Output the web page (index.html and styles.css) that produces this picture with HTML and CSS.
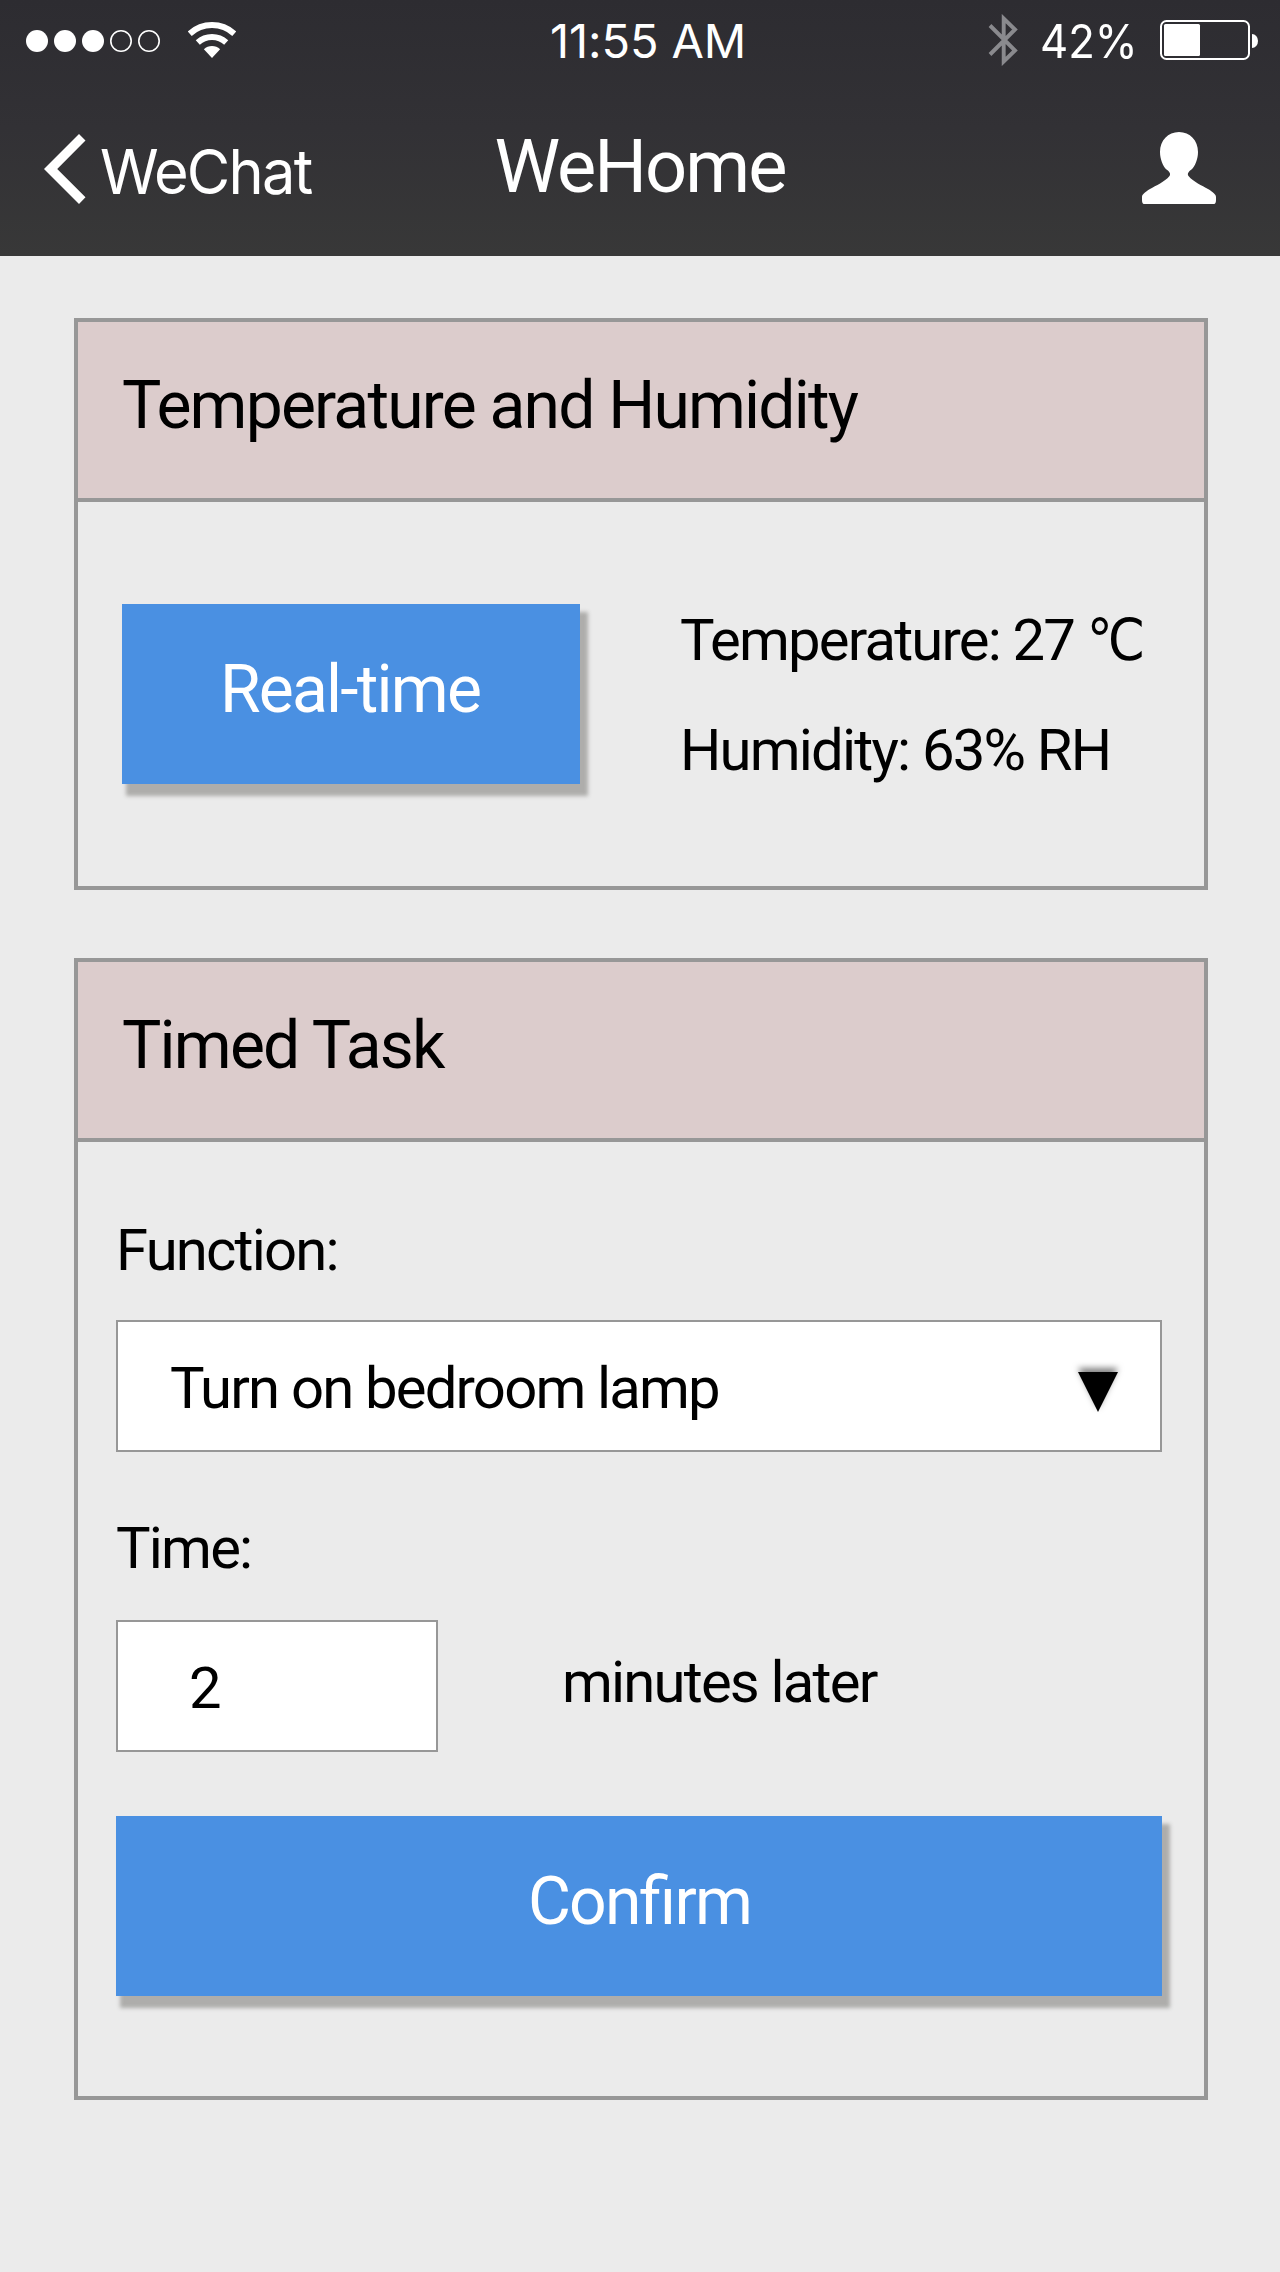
FILE: index.html
```html
<!DOCTYPE html>
<html lang="en">
<head>
<meta charset="utf-8">
<title>WeHome</title>
<link rel="stylesheet" href="styles.css">
</head>
<body>
<header class="top">
  <div class="status">
    <svg class="signal" width="134" height="22" viewBox="0 0 134 22">
      <g fill="#fff"><circle cx="11" cy="11" r="11"/><circle cx="39" cy="11" r="11"/><circle cx="67" cy="11" r="11"/></g>
      <g fill="none" stroke="#fff" stroke-width="1.6"><circle cx="95" cy="11" r="10.2"/><circle cx="123" cy="11" r="10.2"/></g>
    </svg>
    <svg class="wifi" width="48" height="36" viewBox="0 0 48 36">
      <g fill="none" stroke="#fff" stroke-width="6"><path d="M1.7 11.7A33 33 0 0 1 46.3 11.7"/><path d="M9.8 20.5A21 21 0 0 1 38.2 20.5"/></g>
      <path fill="#fff" d="M24 36L15.9 27.2A12 12 0 0 1 32.1 27.2Z"/>
    </svg>
    <span class="clock">11:55 AM</span>
    <div class="power">
      <svg class="bluetooth" width="30" height="52" viewBox="0 0 30 52"><path fill="none" stroke="#8a8a8e" stroke-width="3.9" stroke-miterlimit="6" d="M2 11.5L27 36.5L15.7 47.500V4.500L27 15.500L2 40.5"/></svg>
      <span class="percent">42%</span>
      <svg class="battery" width="98" height="40" viewBox="0 0 98 40">
        <rect x="1" y="1" width="88" height="38" rx="5.5" fill="none" stroke="#fff" stroke-width="2"/>
        <rect x="4" y="4" width="36" height="32" rx="1.5" fill="#fff"/>
        <path fill="#fff" d="M92 14A6 7 0 0 1 92 28Z"/>
      </svg>
    </div>
  </div>
  <nav class="nav">
    <a class="back">
      <svg width="42" height="70" viewBox="0 0 42 70"><path fill="#fff" d="M0 35L35 0L41.5 6.5L13.2 35L41.5 63.3L35 70Z"/></svg>
      <span class="back-label">WeChat</span>
    </a>
    <h1 class="title">WeHome</h1>
    <svg class="person" width="74" height="72" viewBox="0 0 74 72"><path fill="#fff" d="M37 0C48 0 56 8.5 56 20C56 27 53 34.500 49.500 37.500C46.500 39.500 45 42 46.500 44C51.500 50 60 53.500 66 57C71 60 74 62.500 74 65V68C74 70 73.500 72 72 72H2C.5 72 0 70 0 68V65C0 62.500 3 60 8 57C14 53.500 22.500 50 27.500 44C29 42 27.500 39.500 24.500 37.500C21 34.500 18 27 18 20C18 8.500 26 0 37 0Z"/></svg>
  </nav>
</header>
<main class="content">
  <section class="card">
    <h2 class="card-title">Temperature and Humidity</h2>
    <div class="climate">
      <button class="button realtime">Real-time</button>
      <div class="readings">
        <p>Temperature: 27 <span class="degrees">℃</span></p>
        <p>Humidity: 63% RH</p>
      </div>
    </div>
  </section>
  <section class="card">
    <h2 class="card-title">Timed Task</h2>
    <div class="task">
      <p class="label">Function:</p>
      <div class="field select">
        <span>Turn on bedroom lamp</span>
        <svg class="arrow" width="40" height="40" viewBox="0 0 40 40"><path d="M0 0H40L20 40Z"/></svg>
      </div>
      <p class="label time-label">Time:</p>
      <div class="delay">
        <div class="field minutes">2</div>
        <span class="unit">minutes later</span>
      </div>
      <button class="button confirm">Confirm</button>
    </div>
  </section>
</main>
</body>
</html>
```
FILE: styles.css
```css
* { box-sizing: border-box; }
body {
  margin: 0;
  min-height: 2272px;
  background: #ebebeb;
  color: #000;
  font: 58px/70px Roboto, sans-serif;
  letter-spacing: -1.81px;
  white-space: nowrap;
}
h1, h2, p { margin: 0; font-weight: 400; }
svg { display: block; flex: none; }

/* header */
.top {
  height: 256px;
  background: linear-gradient(#2d2c31, #323135 50%, #383838);
  color: #fff;
}
.status {
  display: flex;
  align-items: center;
  height: 82px;
  padding: 0 22px 0 26px;
  font: 47px/82px Inter, sans-serif;
  letter-spacing: -0.1px;
}
.wifi { margin: 0 0 2px 28px; }
.clock { margin-left: 314px; }
.power { display: flex; align-items: center; margin-left: auto; }
.bluetooth { margin-bottom: 2px; }
.percent {
  width: 94px;
  margin: 0 26px 0 22px;
  transform: scaleX(0.93);
  transform-origin: left;
}
.battery { margin-bottom: 2px; }
.nav {
  display: grid;
  grid-template-columns: 1fr auto 1fr;
  align-items: center;
  height: 174px;
  padding: 0 64px 0 44px;
}
.back {
  display: flex;
  align-items: center;
  gap: 14px;
  font: 62px/70px Inter, sans-serif;
}
.back-label {
  padding-top: 5px;
  letter-spacing: -1.8px;
  transform: scaleX(0.96);
  transform-origin: left;
}
.title {
  margin: 0 -10px 5px 10px;
  font-size: 74px;
  line-height: 86px;
  letter-spacing: -2px;
}
.person { justify-self: end; margin-bottom: 2px; }

/* cards */
.content {
  display: flex;
  flex-direction: column;
  gap: 68px;
  padding: 62px 72px 0 74px;
}
.card { border: 4px solid #979797; }
.card-title {
  height: 180px;
  padding-left: 44px;
  border-bottom: 4px solid #979797;
  background: #dccccc;
  font-size: 66px;
  line-height: 167px;
  letter-spacing: -1.81px;
}
.button {
  display: block;
  height: 180px;
  padding: 0 0 9px;
  border: 0;
  background: #4a90e2;
  box-shadow: 6px 10px 4px 2px #aeadab;
  color: #fff;
  font: 66px/171px Roboto, sans-serif;
  font-feature-settings: "liga" 1;
  letter-spacing: -1.8px;
}
.climate {
  display: flex;
  align-items: flex-start;
  gap: 100px;
  height: 384px;
  padding: 83px 0 0 44px;
}
.realtime { width: 458px; margin-top: 19px; padding-right: 2px; }
.readings { line-height: 110px; }
.degrees {
  font-family: "DejaVu Sans Condensed", "DejaVu Sans", sans-serif;
  font-stretch: semi-condensed;
  line-height: 1;
}

/* timed task form */
.task { height: 954px; padding: 73px 42px 0 38px; }
.field {
  height: 132px;
  border: 2px solid #979797;
  background: #fff;
  line-height: 132px;
}
.select {
  display: flex;
  justify-content: space-between;
  margin-top: 35px;
  padding: 0 42px 0 52px;
}
.arrow {
  margin-top: 50px;
  overflow: visible;
  filter: drop-shadow(0 -4px 3px rgba(0, 0, 0, 0.5));
}
.time-label { margin-top: 61px; }
.delay {
  display: flex;
  gap: 124px;
  margin-top: 37px;
}
.minutes { width: 322px; padding-left: 71px; }
.unit { line-height: 124px; }
.confirm { width: 100%; margin-top: 64px; padding-left: 1px; }
```
